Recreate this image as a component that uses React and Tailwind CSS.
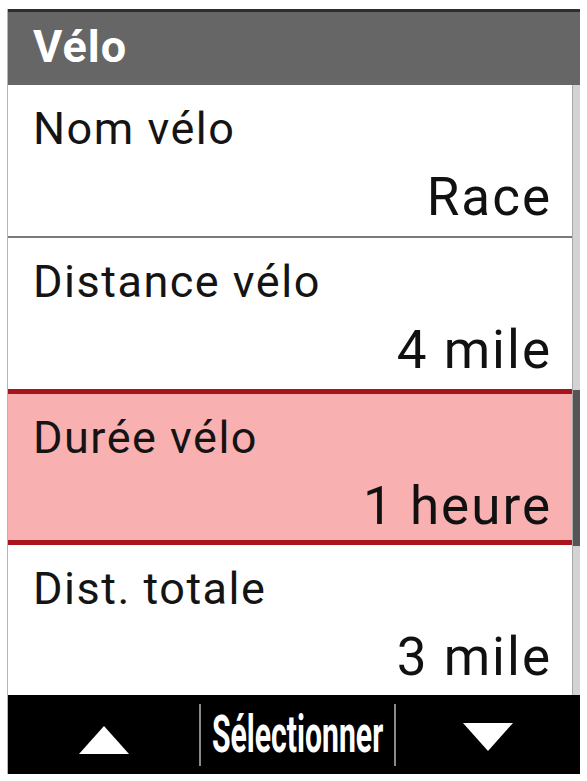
import React from "react";

const rows = [
  { label: "Nom vélo", value: "Race" },
  { label: "Distance vélo", value: "4 mile" },
  { label: "Durée vélo", value: "1 heure", active: true },
  { label: "Dist. totale", value: "3 mile" },
];

function Row({ label, value, active, last }) {
  let cls = "h-[153px] border-b-2 border-[#7a7a7a] bg-white";
  if (active) cls = "h-[156px] -mt-[2px] border-y-[5px] border-[#a8141c] bg-[#f8b0b1]";
  if (last) cls = "h-[150px] bg-white";
  return (
    <div className={cls}>
      <div className="pl-[25px] pr-[20px] pt-[19px]">
        <p className="text-[45px] leading-[50px] tracking-[1.5px] text-[#141414]">{label}</p>
        <p className="mt-[13px] text-right text-[53px] leading-[60px] tracking-[2px] text-[#111]">{value}</p>
      </div>
    </div>
  );
}

export default function App() {
  return (
    <div className="w-[587px] h-[781px] bg-white pl-[7px] pt-[9px]" style={{ fontFamily: "Roboto, 'Noto Sans', sans-serif" }}>
      <div className="w-[573px] flex flex-col border-l border-[#b5b5b5]">
        <div className="h-[76px] bg-[#666666] border-t-[3px] border-[#2e2e2e] pl-[25px] flex items-center">
          <h1 className="text-[45px] leading-none font-bold tracking-[1px] text-white -mt-[4px]">Vélo</h1>
        </div>

        <div className="flex">
          <div className="flex-1 flex flex-col">
            {rows.map((r, i) => (
              <Row key={i} {...r} last={i === rows.length - 1} />
            ))}
          </div>
          <div className="w-[8px] flex flex-col bg-[#d3d3d3] border-l border-[#a9a9a9]">
            <div className="h-[305px]" />
            <div className="h-[156px] bg-[#555555]" />
          </div>
        </div>

        <div className="h-[79px] bg-black flex items-center">
          <div className="w-[191px] flex justify-center pt-[10px]">
            <svg width="50" height="28" viewBox="0 0 50 28">
              <polygon points="25,0 50,28 0,28" fill="white" />
            </svg>
          </div>
          <div className="w-[2px] h-[62px] bg-[#8a8a8a]" />
          <div className="w-[193px] flex justify-center">
            <span className="-mx-[62px] text-[52px] leading-none font-bold text-white scale-x-[0.58] whitespace-nowrap">Sélectionner</span>
          </div>
          <div className="w-[2px] h-[62px] bg-[#8a8a8a]" />
          <div className="flex-1 flex justify-center pt-[4px]">
            <svg width="50" height="28" viewBox="0 0 50 28">
              <polygon points="0,0 50,0 25,28" fill="white" />
            </svg>
          </div>
        </div>
      </div>
    </div>
  );
}
